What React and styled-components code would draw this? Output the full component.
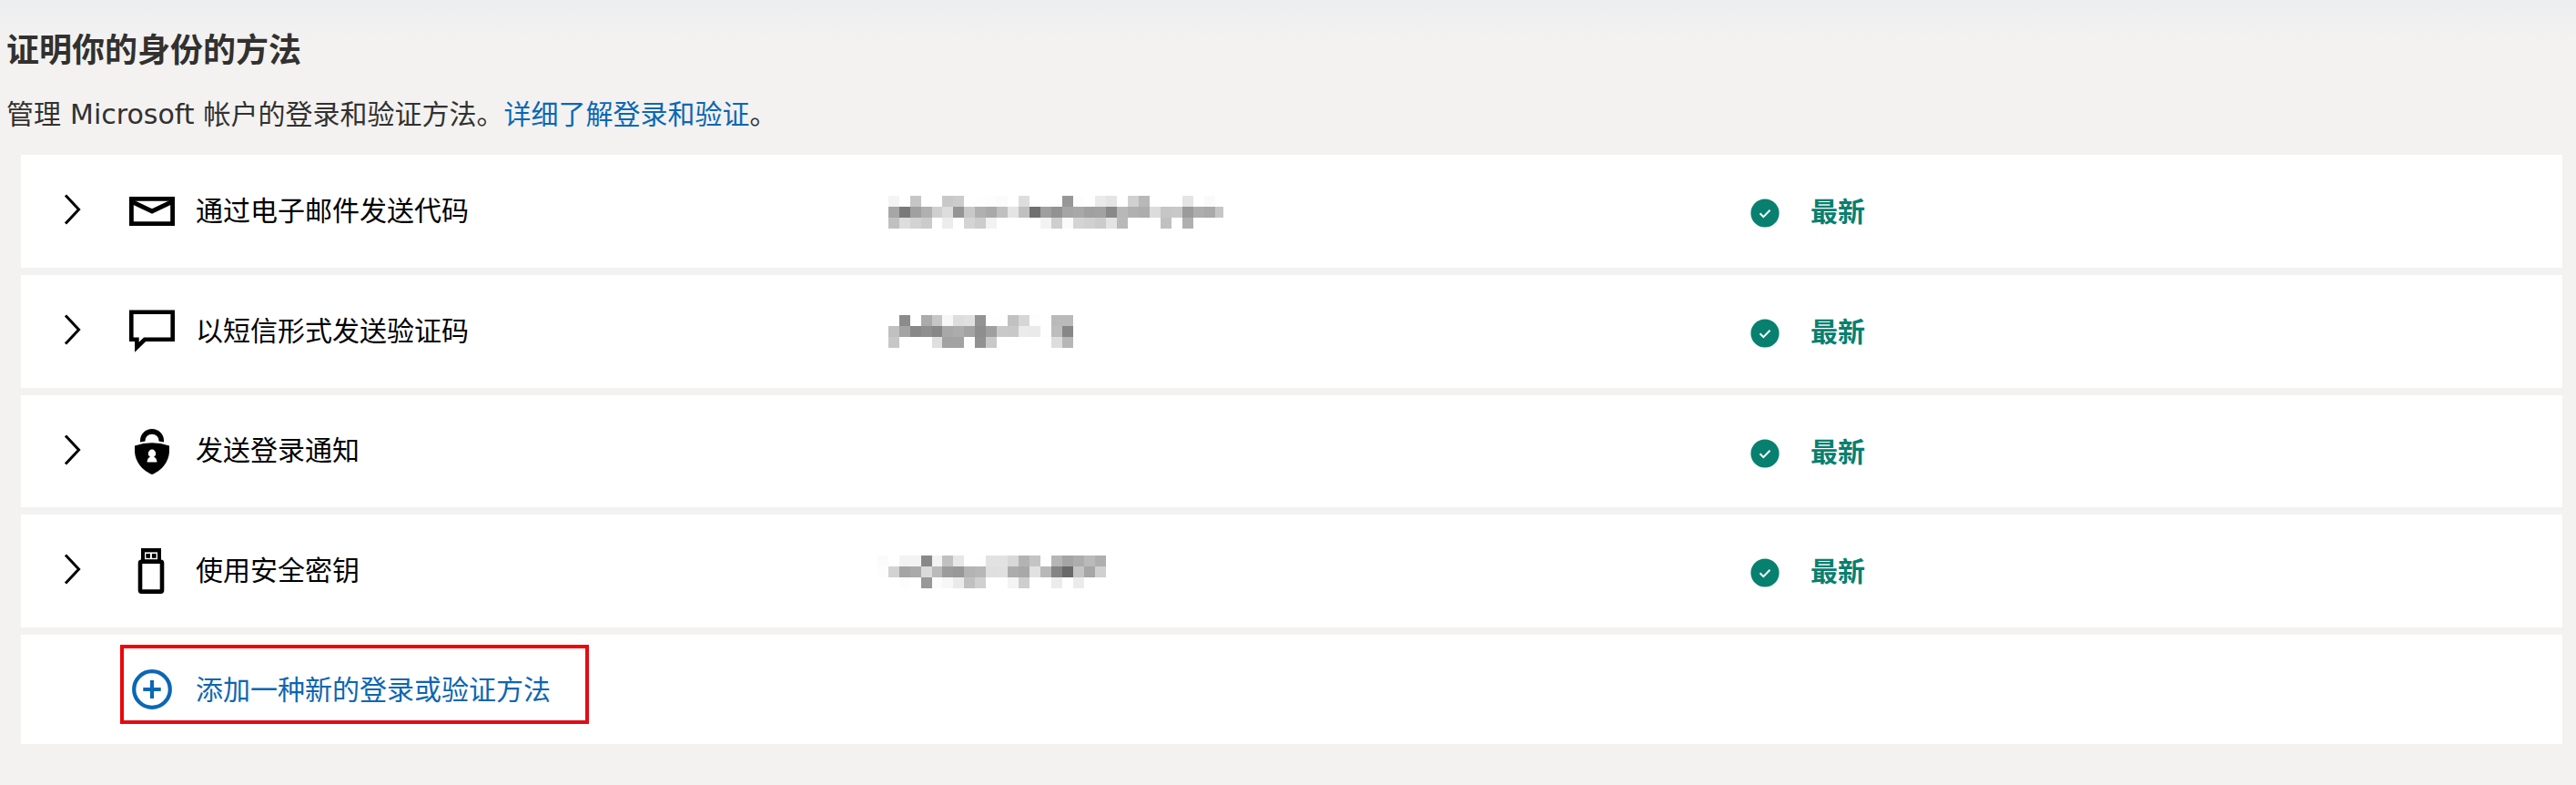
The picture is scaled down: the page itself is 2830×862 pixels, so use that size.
import React from "react";
import styled, { createGlobalStyle } from "styled-components";

const GlobalStyle = createGlobalStyle`
  * { box-sizing: border-box; }
  body {
    margin: 0;
    background: #f3f2f1;
    font-family: "Noto Sans", "Noto Sans CJK SC", sans-serif;
  }
`;

const Page = styled.main`
  min-height: 862px;
  padding: 35px 15px 45px 7px;
  background: linear-gradient(#eceef0 0, #edeef0 7px, #efefef 14px, #f1f0f1 24px, #f3f2f1 44px);
`;

const Heading = styled.h1`
  margin: 0 0 30px;
  font-size: 36px;
  line-height: 40px;
  font-weight: 600;
  color: #323130;
`;

const Intro = styled.p`
  margin: 0 0 25px;
  height: 40px;
  font-size: 30px;
  line-height: 40px;
  color: #323130;
`;

const Brand = styled.span`
  font-family: "DejaVu Sans", sans-serif;
  line-height: 1;
  white-space: pre;
  word-spacing: 0.5px;
`;

const Link = styled.a`
  color: #0b67b5;
  text-decoration: none;
`;

const MethodList = styled.div`
  display: flex;
  flex-direction: column;
  gap: 8px;
  margin-left: 16px;
`;

const Row = styled.div`
  display: flex;
  align-items: center;
  height: ${(p) => p.$height}px;
  background: #fff;
`;

const Chevron = styled.svg`
  flex: none;
  width: 22px;
  height: 36px;
  margin: 0 50px 4px 47px;
`;

const IconBox = styled.div`
  flex: none;
  display: flex;
  justify-content: center;
  align-items: center;
  width: 50px;
  height: 56px;
  margin-right: 23px;
`;

const Label = styled.div`
  width: 749px;
  padding-bottom: 3px;
  font-size: 30px;
  line-height: 40px;
  color: #000;
`;

const Detail = styled.div`
  flex: none;
  width: 960px;
`;

const Mosaic = styled.div`
  display: grid;
  grid-template-columns: repeat(5, 12px) 11px;
  grid-auto-columns: 12px;
  grid-template-rows: repeat(3, 12px);
  width: max-content;
  margin-top: ${(p) => p.$top}px;
`;

const Cell = styled.span`
  grid-column: ${(p) => p.$col};
  grid-row: ${(p) => p.$row};
  width: ${(p) => (p.$narrow ? "9px" : "auto")};
  background: ${(p) => p.$tone};
`;

const Status = styled.div`
  display: flex;
  align-items: center;
  font-size: 30px;
  line-height: 40px;
  font-weight: 600;
  color: #08806f;
`;

const StatusBadge = styled.svg`
  flex: none;
  width: 32px;
  height: 32px;
  margin: 4px 34px 0 -1px;
`;

const AddButton = styled.button`
  display: flex;
  align-items: center;
  width: 515px;
  height: 87px;
  margin: 0 0 11px 109px;
  padding: 11px 0 0 6px;
  border: 4px solid;
  border-color: #ec060a #e00d14 #e00d14 #ec060a;
  background: transparent;
  font-family: inherit;
  font-size: 30px;
  line-height: 40px;
  color: #0d66b2;
  white-space: nowrap;
  text-align: left;
`;

const MailIcon = () => (
  <svg width="50" height="32" viewBox="0 0 50 32">
    <path d="M2.4 2.4H47.6V29.6H2.4Z" fill="none" stroke="#000" strokeWidth="4.8" />
    <path d="M4 6L25 16L46 6" fill="none" stroke="#000" strokeWidth="4.8" />
  </svg>
);

const MessageIcon = () => (
  <svg width="50" height="48" viewBox="0 0 50 48">
    <path d="M2.3 2.8H47.7V32.8H17L8.4 41.2V32.8H2.3Z" fill="none" stroke="#000" strokeWidth="4.6" strokeMiterlimit="10" />
  </svg>
);

const LockIcon = () => (
  <svg width="38" height="50" viewBox="0 0 38 50">
    <path d="M6 14.5V12.8A13 12.8 0 0 1 32 12.8V14.5L26.5 13.6V12.8A7.5 7 0 0 0 11.5 12.8V13.6Z" fill="#000" />
    <path d="M0 18.5Q19 12.2 38 18.5V25C37.5 36 30 45.5 19 50C8 45.5 .5 36 0 25Z" fill="#000" />
    <ellipse cx="19" cy="27" rx="4.2" ry="4.4" fill="#fff" />
    <path d="M13.6 36.5C13.6 32.5 16 30.2 19 30.2S24.4 32.5 24.4 36.5Z" fill="#fff" />
  </svg>
);

const KeyIcon = () => (
  <svg width="33" height="50" viewBox="0 0 33 50">
    <rect x="4" y="0" width="22" height="14" fill="#000" />
    <rect x="8" y="4.4" width="14" height="8" fill="#fff" />
    <rect x="9.3" y="6" width="4.7" height="4.8" fill="#000" />
    <rect x="15.9" y="6" width="4.7" height="4.8" fill="#000" />
    <rect x="3" y="14.8" width="24" height="32.8" rx="1.4" fill="none" stroke="#000" strokeWidth="4.6" />
  </svg>
);

const AddIcon = () => (
  <svg width="44" height="44" viewBox="0 0 44 44">
    <circle cx="22" cy="22" r="19.8" fill="none" stroke="#0b67b5" strokeWidth="4.2" />
    <path d="M22 12V32M12.3 22H31.7" stroke="#0b67b5" strokeWidth="4.2" />
  </svg>
);

const methods = [
  {
    label: "通过电子邮件发送代码",
    icon: MailIcon,
    height: 124,
    mosaicTop: 2,
    tones: [
      "-- f4 ff c6 ff ff c8 cc ff fe fd fb ff dd ff ff ff 97 fd ff ea e4 ff d0 b8 ff ff ff e4 ff fa ff",
      "-- a6 79 a0 b0 cf dd 95 c8 b0 a9 c0 e4 c0 70 9f 92 a5 a8 a0 a2 89 b8 b0 ad dc c6 c8 9b ad a9 c5",
      "-- c0 dd d2 cb ff ec ff d4 cc f2 ff ff ff ff f3 ce fa d4 d0 cb e3 b9 ff ff ff c0 ff b0 ff ff ff",
    ],
  },
  {
    label: "以短信形式发送验证码",
    icon: MessageIcon,
    height: 124,
    mosaicTop: 0,
    tones: [
      "-- ff 8b ff ab c6 f7 dd e0 93 fe fe c1 d6 fd ff ba ba",
      "-- c0 a3 88 8f 87 a8 ac a3 8e 9f c9 c8 eb ea fe bd 87",
      "-- c7 ff ff ff df a2 a2 fe 91 c9 ff ff ff ff ff dd b6",
    ],
  },
  {
    label: "发送登录通知",
    icon: LockIcon,
    height: 123,
    mosaicTop: 0,
    tones: [],
  },
  {
    label: "使用安全密钥",
    icon: KeyIcon,
    height: 124,
    mosaicTop: 2,
    tones: [
      "fb ff f3 f3 88 f3 c1 e7 ff fe e2 e2 d8 b3 c4 fe b6 a5 ad ba af",
      "fd d2 a5 aa da ba 9c 98 b3 b7 df e0 ac a8 e1 b8 84 69 c4 a6 d0",
      "ff ff fd ff 98 fc f7 ea c0 d0 ff ff f4 ce ff ff ec ff eb ff ff",
    ],
  },
];

const Redacted = ({ tones, top }) => (
  <Mosaic $top={top}>
    {tones.flatMap((line, row) =>
      line.split(" ").map((tone, col) => (
        <Cell
          key={`${row}-${col}`}
          $col={col + 1}
          $row={row + 1}
          $narrow={col === 31}
          $tone={tone === "--" ? "transparent" : `#${tone}${tone}${tone}`}
        />
      ))
    )}
  </Mosaic>
);

const Method = ({ label, icon: Icon, height, tones, mosaicTop }) => (
  <Row $height={height}>
    <Chevron viewBox="0 0 22 36">
      <path d="M2 2.5L16.6 18L2 33.5" fill="none" stroke="#000" strokeWidth="3" />
    </Chevron>
    <IconBox>
      <Icon />
    </IconBox>
    <Label>{label}</Label>
    <Detail>{tones.length > 0 && <Redacted tones={tones} top={mosaicTop} />}</Detail>
    <Status>
      <StatusBadge viewBox="0 0 32 32">
        <circle cx="16" cy="16" r="15.6" fill="#08806f" />
        <path d="M10.5 16.3L14.3 20.1L21.5 12.7" fill="none" stroke="#fff" strokeWidth="2" />
      </StatusBadge>
      最新
    </Status>
  </Row>
);

export default function App() {
  return (
    <>
      <GlobalStyle />
      <Page>
        <Heading>证明你的身份的方法</Heading>
        <Intro>
          管理<Brand>{" Microsoft "}</Brand>帐户的登录和验证方法。<Link>详细了解登录和验证</Link>。
        </Intro>
        <MethodList>
          {methods.map((m) => (
            <Method key={m.label} {...m} />
          ))}
          <Row $height={120}>
            <AddButton>
              <IconBox>
                <AddIcon />
              </IconBox>
              添加一种新的登录或验证方法
            </AddButton>
          </Row>
        </MethodList>
      </Page>
    </>
  );
}
